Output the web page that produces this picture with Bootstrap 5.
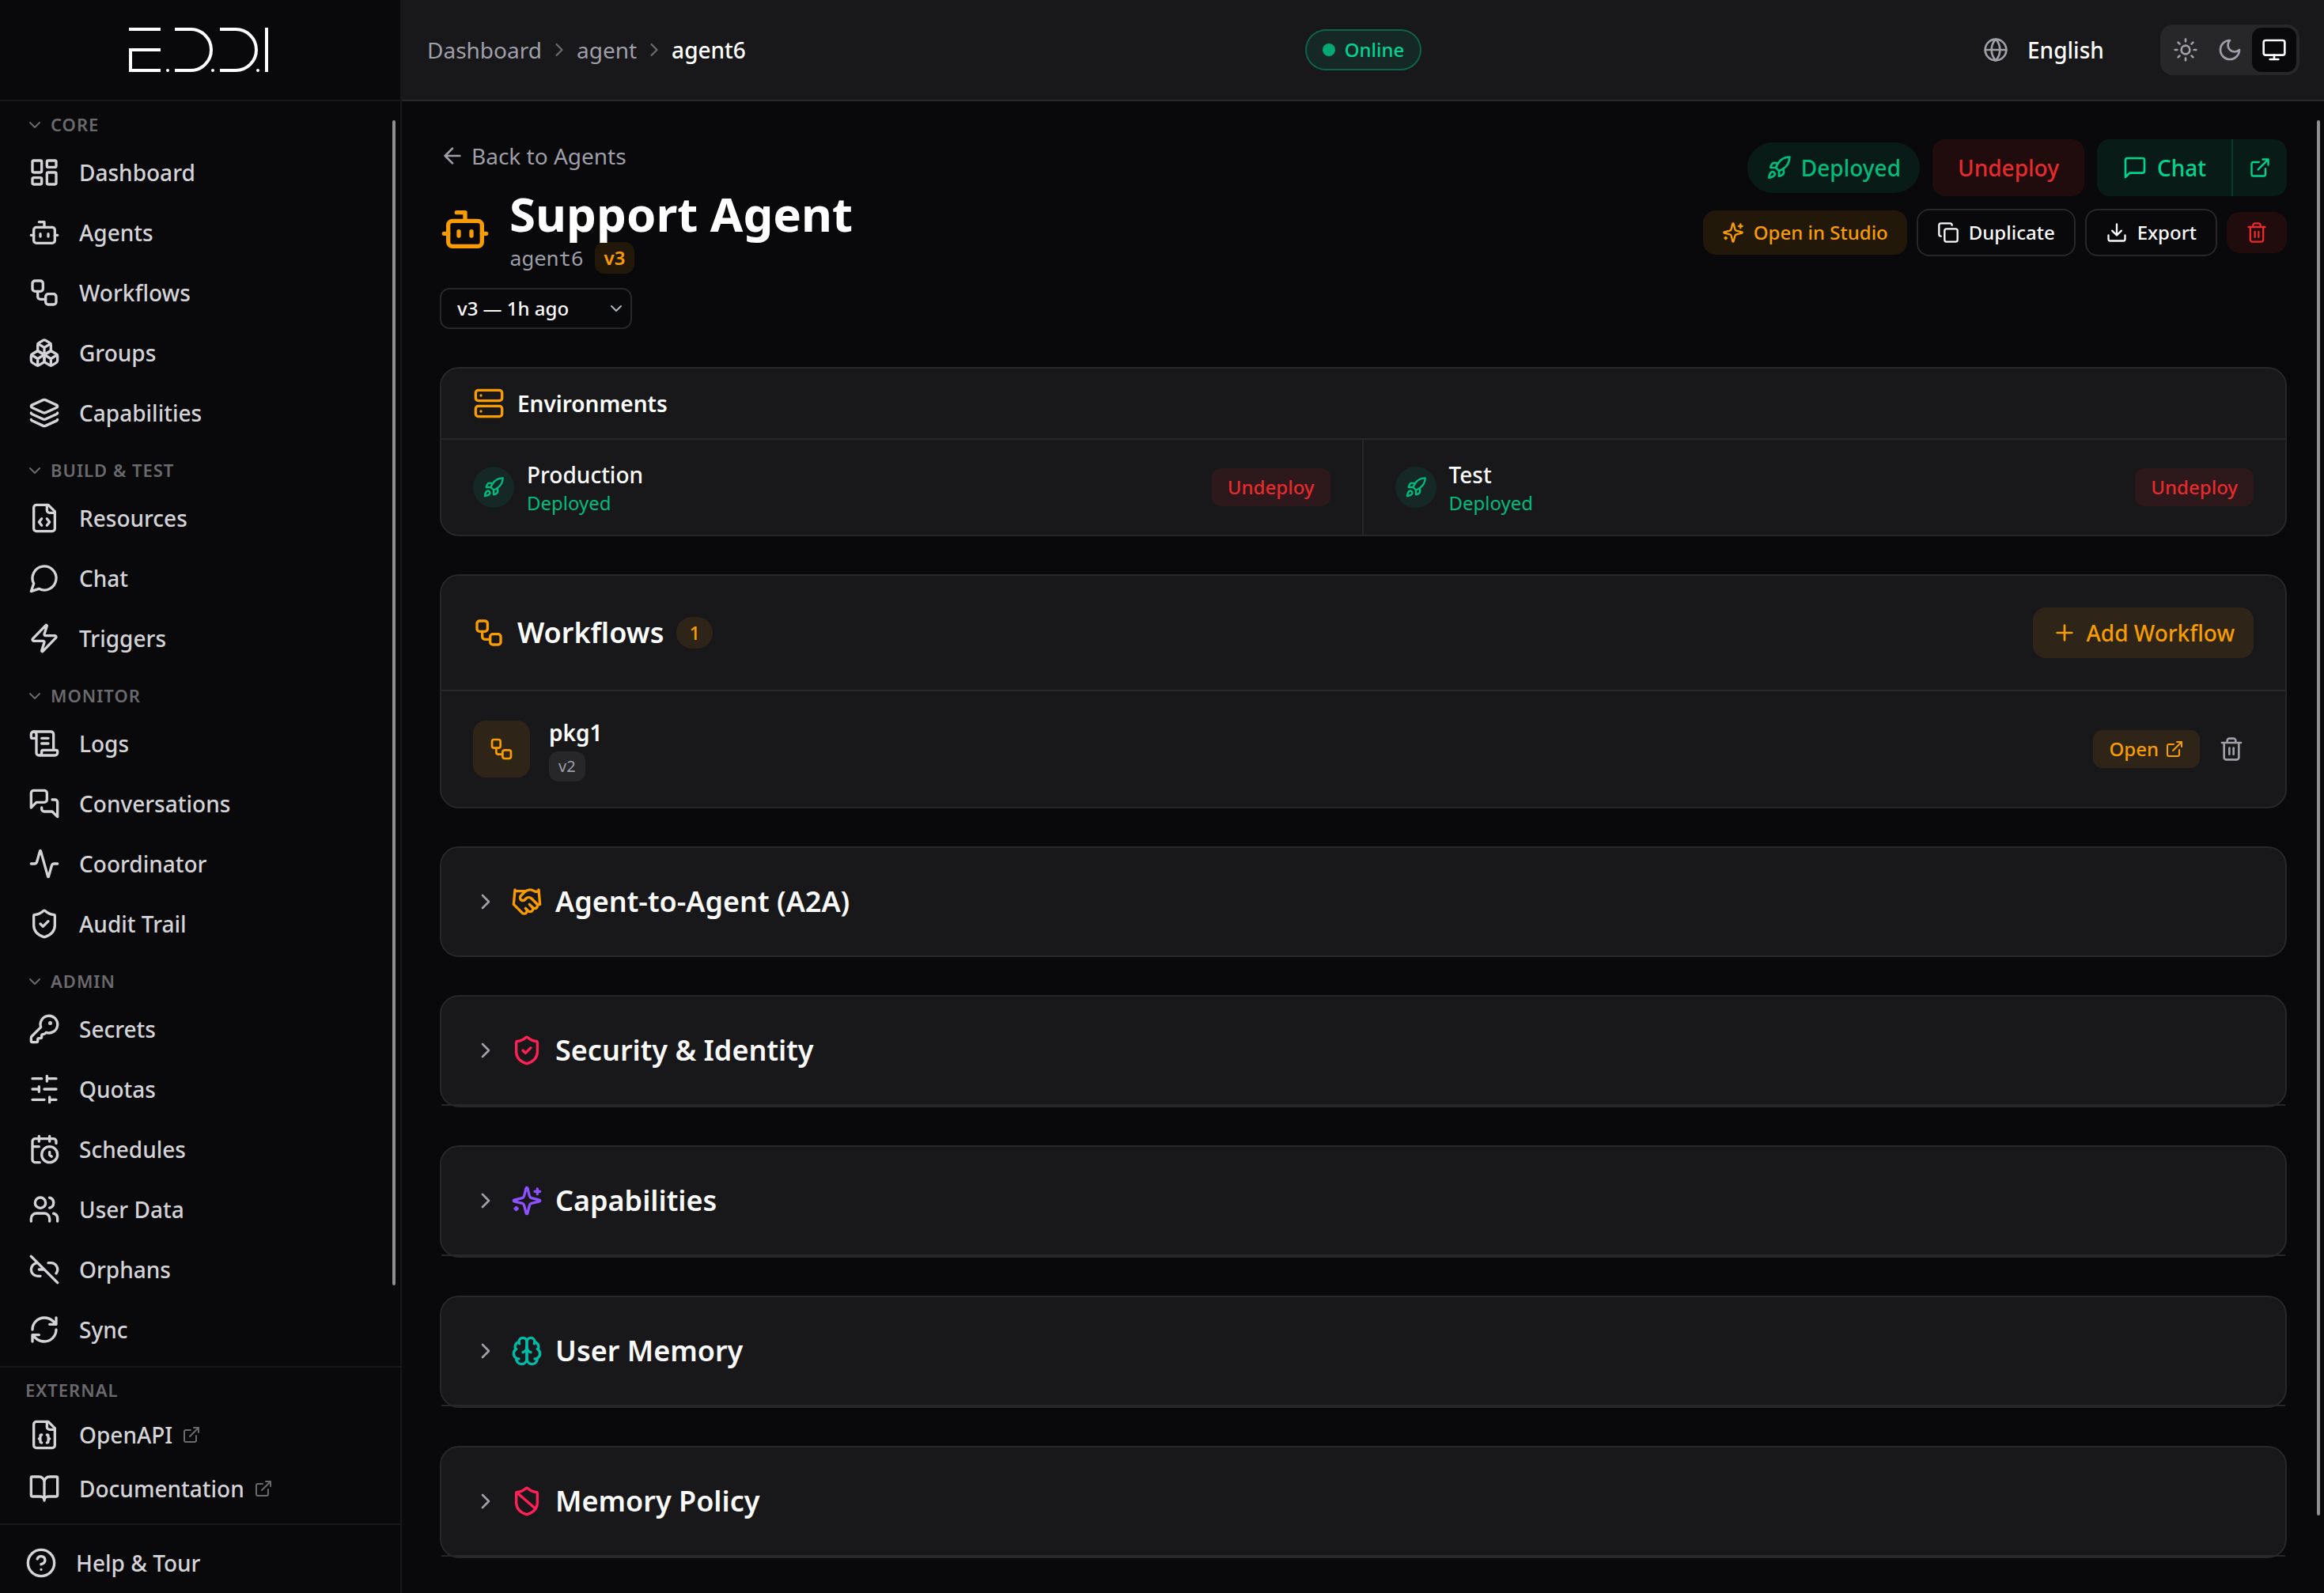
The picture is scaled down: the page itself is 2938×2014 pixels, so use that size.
<!DOCTYPE html>
<html lang="en" data-bs-theme="dark">
<head>
<meta charset="utf-8">
<meta name="viewport" content="width=device-width, initial-scale=1">
<title>Support Agent - EDDI</title>
<link rel="stylesheet" href="https://cdn.jsdelivr.net/npm/bootstrap@5.3.0/dist/css/bootstrap.min.css">
<style>
  :root {
    --ink: #fafafa;
    --ink-nav: #d4d4d8;
    --ink-soft: #9f9fa9;
    --ink-faint: #6a6a6e;
    --page: #09090b;
    --panel: #18181b;
    --line: #27272a;
    --amber: #f99c00;
    --amber-bg: rgba(249, 156, 0, .1);
    --green: #00bc7d;
    --green-lt: #00d492;
    --green-bg: rgba(0, 188, 125, .1);
    --red: #e92a2c;
    --red-bg: rgba(231, 37, 42, .1);
  }
  body {
    font-family: "Noto Sans", sans-serif;
    font-size: 28px;
    line-height: 40px;
    color: var(--ink);
    background: var(--page);
    height: 100vh;
    overflow: hidden;
  }
  a { text-decoration: none; color: inherit; }
  h1, h2, h3, p { margin: 0; }
  .ico { fill: none; stroke: currentColor; stroke-width: 2; stroke-linecap: round; stroke-linejoin: round; flex: none; width: 28px; height: 28px; }
  .ico-24 { width: 24px; height: 24px; }
  .ico-32 { width: 32px; height: 32px; }
  .ico-40 { width: 40px; height: 40px; }
  .ico-64 { width: 64px; height: 64px; }
  .gap-8 { gap: 8px; }
  .gap-12 { gap: 12px; }
  .gap-14 { gap: 14px; }
  .gap-16 { gap: 16px; }
  .gap-24 { gap: 24px; }
  .gap-48 { gap: 48px; }
  .fs-24 { font-size: 24px; line-height: 32px; }
  .fw-mid { font-weight: 500; }
  .c-soft { color: var(--ink-soft); }
  .c-faint { color: var(--ink-faint); }
  .c-amber { color: var(--amber); }
  .c-green { color: var(--green); }
  .c-rose { color: #ff2056; }
  .c-violet { color: #8e51ff; }
  .c-teal { color: #00bba7; }

  /* sidebar */
  .side { width: 508px; flex: none; border-right: 2px solid var(--panel); color: var(--ink-nav); font-weight: 500; }
  .side-logo { height: 128px; border-bottom: 2px solid var(--panel); }
  .side-logo svg { width: 180px; height: 56px; fill: none; stroke: #fff; stroke-width: 4; }
  .side-nav { padding: 5px 16px 0; min-height: 0; overflow: hidden; }
  .side-list { display: flex; flex-direction: column; gap: 4px; margin-bottom: 12px; }
  .side-head { display: flex; align-items: center; gap: 8px; width: 100%; border: 0; background: none; padding: 8px 16px; text-align: left; }
  .side-head, .side-title { font-size: 22px; line-height: 33px; font-weight: 600; letter-spacing: 1px; color: var(--ink-faint); text-transform: uppercase; }
  .side-link { display: flex; align-items: center; gap: 24px; padding: 16px 20px; border-radius: 16px; }
  .side-ext { border-top: 2px solid var(--panel); padding: 12px 16px; }
  .side-ext .side-title { padding: 0 16px; margin-bottom: 8px; }
  .side-ext .side-list { margin: 0; }
  .side-ext .side-link { padding: 12px 20px; }
  .side-ext .ico-24 { color: var(--ink-faint); margin-left: -12px; }
  .side-foot { border-top: 2px solid var(--panel); padding: 12px 16px 2px; }
  .side-foot .side-link { padding: 16px; background: none; border: 0; color: inherit; font-weight: 500; width: 100%; }
  .thumb-bar { position: absolute; width: 4px; border-radius: 4px; background: #8f8f91; }
  .thumb-side { top: 152px; right: 6px; bottom: 389px; }
  .thumb-main { top: 24px; right: 5px; bottom: 98px; }

  /* top bar */
  .top { height: 128px; border-bottom: 2px solid var(--line); background: var(--panel); margin-left: -2px; padding: 0 31px 0 34px; }
  .top > div { flex: 1 1 0; }
  .online { border: 2px solid rgba(0, 188, 125, .4); background: var(--green-bg); color: var(--green-lt); padding: 8px 20px; border-radius: 26px; }
  .online i { width: 16px; height: 16px; border-radius: 50%; background: #05aa72; }
  .lang select { appearance: none; background: none; border: 0; color: var(--ink); font-weight: 500; width: 120px; padding: 0; }
  .theme { background: var(--line); border-radius: 16px; padding: 4px; }
  .theme button { width: 56px; height: 56px; border: 0; border-radius: 12px; background: none; color: var(--ink-soft); padding: 0; display: grid; place-items: center; }
  .theme button.on { background: var(--page); color: var(--ink); }

  /* page */
  .page { padding: 48px 47px 48px 48px; min-height: 0; }
  .back { line-height: 42px; }
  .ident { padding-bottom: 2px; }
  .title-xl { font-size: 60px; line-height: 72px; font-weight: 700; }
  .mono { font-family: "Noto Sans Mono", "DejaVu Sans Mono", monospace; font-size: 26px; line-height: 32px; }
  .tagbox { font-size: 24px; line-height: 32px; padding: 4px 12px; border-radius: 12px; font-weight: 600; background: var(--amber-bg); color: var(--amber); }
  .tagbox-v2 { font-size: 20px; line-height: 30px; font-weight: 400; background: var(--line); color: var(--ink-soft); align-self: flex-start; margin-top: 4px; }
  .pill-count { font-size: 24px; line-height: 32px; font-weight: 500; padding: 4px 16px; border-radius: 20px; background: var(--amber-bg); color: var(--amber); }
  .ver { --bs-form-select-bg-img: url("data:image/svg+xml,%3csvg xmlns='http://www.w3.org/2000/svg' viewBox='0 0 16 16'%3e%3cpath fill='none' stroke='%23fafafa' stroke-width='3' stroke-linecap='round' stroke-linejoin='round' d='m2 5 6 6 6-6'/%3e%3c/svg%3e");
    width: 243px; height: 52px; padding: 0 48px 0 20px; font-size: 24px; line-height: 48px; font-weight: 500; border: 2px solid var(--line); border-radius: 12px; color: var(--ink); background-color: var(--page); background-size: 16px 16px; background-position: right 10px center; }
  .b { display: inline-flex; align-items: center; justify-content: center; border: 0; gap: 12px; font-weight: 500; border-radius: 16px; padding: 12px 24px; font-size: 24px; line-height: 32px; color: var(--ink); background: none; }
  .b-lg { font-size: 28px; line-height: 40px; padding: 16px 32px; }
  .b-md { font-size: 28px; line-height: 40px; padding: 12px 24px; }
  .b-sm { padding: 8px 20px; gap: 8px; border-radius: 12px; }
  .b-line { border: 2px solid var(--line); }
  .b-amber { background: var(--amber-bg); color: var(--amber); }
  .b-red { background: var(--red-bg); color: var(--red); }
  .b-green { background: var(--green-bg); color: var(--green-lt); }
  .b-trash { padding: 12px; color: var(--ink-soft); }
  .b-del { padding: 12px 24px; }
  .chat-pair { border-radius: 16px; overflow: hidden; }
  .chat-pair .b { border-radius: 0; }
  .chat-pair .b + .b { border-left: 2px solid rgba(0, 188, 125, .2); padding: 0 20px; }
  .state { border-radius: 32px; color: var(--green); }
  .panel { background: var(--panel); border: 2px solid var(--line); border-radius: 24px; }
  .panel-top { padding: 24px 40px; border-bottom: 2px solid var(--line); }
  .panel-top-lg { padding: 40px; }
  .env { padding: 24px 40px; }
  .env:first-child { border-right: 2px solid var(--line); }
  .dotico { width: 52px; height: 52px; border-radius: 50%; background: var(--green-bg); display: grid; place-items: center; }
  .wf-row { padding: 32px 40px; }
  .wf-ico { width: 72px; height: 72px; border-radius: 16px; background: var(--amber-bg); display: grid; place-items: center; }
  .title-md { font-size: 36px; line-height: 56px; font-weight: 600; }
  .title-sm { font-size: 28px; line-height: 40px; font-weight: 600; }
  .fold { display: flex; align-items: center; gap: 16px; width: 100%; padding: 40px; background: none; border: 0; color: var(--ink); text-align: left; }
  .fold-line { border-bottom: 2px solid var(--line); }
</style>
<script src="https://cdn.jsdelivr.net/npm/bootstrap@5.3.0/dist/js/bootstrap.bundle.min.js"></script>
</head>
<body class="d-flex">
<svg class="d-none" aria-hidden="true">
  <symbol id="dash" viewBox="0 0 24 24"><rect width="7" height="9" x="3" y="3" rx="1"/><rect width="7" height="5" x="14" y="3" rx="1"/><rect width="7" height="9" x="14" y="12" rx="1"/><rect width="7" height="5" x="3" y="16" rx="1"/></symbol>
  <symbol id="bot" viewBox="0 0 24 24"><path d="M12 8V4H8"/><rect width="16" height="12" x="4" y="8" rx="2"/><path d="M2 14h2M20 14h2M15 13v2M9 13v2"/></symbol>
  <symbol id="flow" viewBox="0 0 24 24"><rect width="8" height="8" x="3" y="3" rx="2"/><path d="M7 11v4a2 2 0 0 0 2 2h4"/><rect width="8" height="8" x="13" y="13" rx="2"/></symbol>
  <symbol id="boxes" viewBox="0 0 24 24"><path d="M2.97 12.92A2 2 0 0 0 2 14.63v3.24a2 2 0 0 0 .97 1.71l3 1.8a2 2 0 0 0 2.06 0L12 19v-5.5l-5-3-4.03 2.42Z"/><path d="m7 16.5-4.74-2.85M7 16.5l5-3M7 16.5v5.17"/><path d="M12 13.5V19l3.97 2.38a2 2 0 0 0 2.06 0l3-1.8a2 2 0 0 0 .97-1.71v-3.24a2 2 0 0 0-.97-1.71L17 10.5l-5 3Z"/><path d="m17 16.5-5-3M17 16.5l4.74-2.85M17 16.5v5.17"/><path d="M7.97 4.42A2 2 0 0 0 7 6.13v4.37l5 3 5-3V6.13a2 2 0 0 0-.97-1.71l-3-1.8a2 2 0 0 0-2.06 0l-3 1.8Z"/><path d="M12 8 7.26 5.15M12 8l4.74-2.85M12 13.5V8"/></symbol>
  <symbol id="layers" viewBox="0 0 24 24"><path d="M12.83 2.18a2 2 0 0 0-1.66 0L2.6 6.08a1 1 0 0 0 0 1.83l8.58 3.91a2 2 0 0 0 1.66 0l8.58-3.9a1 1 0 0 0 0-1.83z"/><path d="M2 12a1 1 0 0 0 .58.91l8.6 3.91a2 2 0 0 0 1.65 0l8.58-3.9A1 1 0 0 0 22 12"/><path d="M2 17a1 1 0 0 0 .58.91l8.6 3.91a2 2 0 0 0 1.65 0l8.58-3.9A1 1 0 0 0 22 17"/></symbol>
  <symbol id="fcode" viewBox="0 0 24 24"><path d="M15 2H6a2 2 0 0 0-2 2v16a2 2 0 0 0 2 2h12a2 2 0 0 0 2-2V7Z"/><path d="M14 2v4a2 2 0 0 0 2 2h4M10 12.5 8 15l2 2.5M14 12.5l2 2.5-2 2.5"/></symbol>
  <symbol id="fjson" viewBox="0 0 24 24"><path d="M15 2H6a2 2 0 0 0-2 2v16a2 2 0 0 0 2 2h12a2 2 0 0 0 2-2V7Z"/><path d="M14 2v4a2 2 0 0 0 2 2h4M10 12a1 1 0 0 0-1 1v1a1 1 0 0 1-1 1 1 1 0 0 1 1 1v1a1 1 0 0 0 1 1M14 18a1 1 0 0 0 1-1v-1a1 1 0 0 1 1-1 1 1 0 0 1-1-1v-1a1 1 0 0 0-1-1"/></symbol>
  <symbol id="bubble" viewBox="0 0 24 24"><path d="M7.9 20A9 9 0 1 0 4 16.1L2 22Z"/></symbol>
  <symbol id="zap" viewBox="0 0 24 24"><path d="M4 14a1 1 0 0 1-.78-1.63l9.9-10.2a.5.5 0 0 1 .86.46l-1.92 6.02A1 1 0 0 0 13 10h7a1 1 0 0 1 .78 1.63l-9.9 10.2a.5.5 0 0 1-.86-.46l1.92-6.02A1 1 0 0 0 11 14z"/></symbol>
  <symbol id="scroll" viewBox="0 0 24 24"><path d="M15 12h-5M15 8h-5M19 17V5a2 2 0 0 0-2-2H4"/><path d="M8 21h12a2 2 0 0 0 2-2v-1a1 1 0 0 0-1-1H11a1 1 0 0 0-1 1v1a2 2 0 1 1-4 0V5a2 2 0 1 0-4 0v2a1 1 0 0 0 1 1h3"/></symbol>
  <symbol id="talks" viewBox="0 0 24 24"><path d="M14 9a2 2 0 0 1-2 2H6l-4 4V4a2 2 0 0 1 2-2h8a2 2 0 0 1 2 2z"/><path d="M18 9h2a2 2 0 0 1 2 2v11l-4-4h-6a2 2 0 0 1-2-2v-1"/></symbol>
  <symbol id="pulse" viewBox="0 0 24 24"><path d="M22 12h-2.48a2 2 0 0 0-1.93 1.46l-2.35 8.36a.25.25 0 0 1-.48 0L9.24 2.18a.25.25 0 0 0-.48 0l-2.35 8.36A2 2 0 0 1 4.49 12H2"/></symbol>
  <symbol id="shield" viewBox="0 0 24 24"><path d="M20 13c0 5-3.5 7.5-7.66 8.95a1 1 0 0 1-.67-.01C7.5 20.5 4 18 4 13V6a1 1 0 0 1 1-1c2 0 4.5-1.2 6.24-2.72a1.17 1.17 0 0 1 1.52 0C14.51 3.81 17 5 19 5a1 1 0 0 1 1 1z"/><path d="m9 12 2 2 4-4"/></symbol>
  <symbol id="ban" viewBox="0 0 24 24"><path d="M20 13c0 5-3.5 7.5-7.66 8.95a1 1 0 0 1-.67-.01C7.5 20.5 4 18 4 13V6a1 1 0 0 1 1-1c2 0 4.5-1.2 6.24-2.72a1.17 1.17 0 0 1 1.52 0C14.51 3.81 17 5 19 5a1 1 0 0 1 1 1z"/><path d="m4.243 5.21 14.39 12.472"/></symbol>
  <symbol id="key" viewBox="0 0 24 24"><path d="M2.586 17.414A2 2 0 0 0 2 18.828V21a1 1 0 0 0 1 1h3a1 1 0 0 0 1-1v-1a1 1 0 0 1 1-1h1a1 1 0 0 0 1-1v-1a1 1 0 0 1 1-1h.172a2 2 0 0 0 1.414-.586l.814-.814a6.5 6.5 0 1 0-4-4z"/><circle cx="16.5" cy="7.5" r=".5" fill="currentColor"/></symbol>
  <symbol id="sliders" viewBox="0 0 24 24"><path d="M21 4h-7M10 4H3M21 12h-9M8 12H3M21 20h-5M12 20H3M14 2v4M8 10v4M16 18v4"/></symbol>
  <symbol id="cal" viewBox="0 0 24 24"><path d="M21 7.5V6a2 2 0 0 0-2-2H5a2 2 0 0 0-2 2v14a2 2 0 0 0 2 2h3.5M16 2v4M8 2v4M3 10h5M17.5 17.5 16 16.3V14"/><circle cx="16" cy="16" r="6"/></symbol>
  <symbol id="users" viewBox="0 0 24 24"><path d="M16 21v-2a4 4 0 0 0-4-4H6a4 4 0 0 0-4 4v2"/><circle cx="9" cy="7" r="4"/><path d="M22 21v-2a4 4 0 0 0-3-3.87M16 3.13a4 4 0 0 1 0 7.75"/></symbol>
  <symbol id="unlink" viewBox="0 0 24 24"><path d="M9 17H7A5 5 0 0 1 7 7M15 7h2a5 5 0 0 1 4 8M8 12h4M2 2l20 20"/></symbol>
  <symbol id="sync" viewBox="0 0 24 24"><path d="M3 12a9 9 0 0 1 9-9 9.75 9.75 0 0 1 6.74 2.74L21 8M21 3v5h-5M21 12a9 9 0 0 1-9 9 9.75 9.75 0 0 1-6.74-2.74L3 16M8 16H3v5"/></symbol>
  <symbol id="book" viewBox="0 0 24 24"><path d="M12 7v14M3 18a1 1 0 0 1-1-1V4a1 1 0 0 1 1-1h5a4 4 0 0 1 4 4 4 4 0 0 1 4-4h5a1 1 0 0 1 1 1v13a1 1 0 0 1-1 1h-6a3 3 0 0 0-3 3 3 3 0 0 0-3-3z"/></symbol>
  <symbol id="help" viewBox="0 0 24 24"><circle cx="12" cy="12" r="10"/><path d="M9.09 9a3 3 0 0 1 5.83 1c0 2-3 3-3 3M12 17h.01"/></symbol>
  <symbol id="ext" viewBox="0 0 24 24"><path d="M15 3h6v6M10 14 21 3M18 13v6a2 2 0 0 1-2 2H5a2 2 0 0 1-2-2V8a2 2 0 0 1 2-2h6"/></symbol>
  <symbol id="globe" viewBox="0 0 24 24"><circle cx="12" cy="12" r="10"/><path d="M12 2a14.5 14.5 0 0 0 0 20 14.5 14.5 0 0 0 0-20M2 12h20"/></symbol>
  <symbol id="sun" viewBox="0 0 24 24"><circle cx="12" cy="12" r="4"/><path d="M12 2v2M12 20v2M4.93 4.93l1.41 1.41M17.66 17.66l1.41 1.41M2 12h2M20 12h2M6.34 17.66l-1.41 1.41M19.07 4.93l-1.41 1.41"/></symbol>
  <symbol id="moon" viewBox="0 0 24 24"><path d="M12 3a6 6 0 0 0 9 9 9 9 0 1 1-9-9Z"/></symbol>
  <symbol id="monitor" viewBox="0 0 24 24"><rect width="20" height="14" x="2" y="3" rx="2"/><path d="M8 21h8M12 17v4"/></symbol>
  <symbol id="rocket" viewBox="0 0 24 24"><path d="M4.5 16.5c-1.5 1.26-2 5-2 5s3.74-.5 5-2c.71-.84.7-2.13-.09-2.91a2.18 2.18 0 0 0-2.91-.09zM12 15l-3-3a22 22 0 0 1 2-3.95A12.88 12.88 0 0 1 22 2c0 2.72-.78 7.5-6 11a22.35 22.35 0 0 1-4 2z"/><path d="M9 12H4s.55-3.03 2-4c1.62-1.08 5 0 5 0M12 15v5s3.03-.55 4-2c1.08-1.62 0-5 0-5"/></symbol>
  <symbol id="msg" viewBox="0 0 24 24"><path d="M21 15a2 2 0 0 1-2 2H7l-4 4V5a2 2 0 0 1 2-2h14a2 2 0 0 1 2 2z"/></symbol>
  <symbol id="spark" viewBox="0 0 24 24"><path d="M9.937 15.5A2 2 0 0 0 8.5 14.063l-6.135-1.582a.5.5 0 0 1 0-.962L8.5 9.936A2 2 0 0 0 9.937 8.5l1.582-6.135a.5.5 0 0 1 .963 0L14.063 8.5A2 2 0 0 0 15.5 9.937l6.135 1.581a.5.5 0 0 1 0 .964L15.5 14.063a2 2 0 0 0-1.437 1.437l-1.582 6.135a.5.5 0 0 1-.963 0z"/><path d="M20 3v4M22 5h-4M4 17v2M5 18H3"/></symbol>
  <symbol id="copy" viewBox="0 0 24 24"><rect width="14" height="14" x="8" y="8" rx="2"/><path d="M4 16c-1.1 0-2-.9-2-2V4c0-1.1.9-2 2-2h10c1.1 0 2 .9 2 2"/></symbol>
  <symbol id="down" viewBox="0 0 24 24"><path d="M21 15v4a2 2 0 0 1-2 2H5a2 2 0 0 1-2-2v-4M7 10l5 5 5-5M12 15V3"/></symbol>
  <symbol id="trash" viewBox="0 0 24 24"><path d="M3 6h18M19 6v14c0 1-1 2-2 2H7c-1 0-2-1-2-2V6M8 6V4c0-1 1-2 2-2h4c1 0 2 1 2 2v2M10 11v6M14 11v6"/></symbol>
  <symbol id="server" viewBox="0 0 24 24"><rect width="20" height="8" x="2" y="2" rx="2"/><rect width="20" height="8" x="2" y="14" rx="2"/><path d="M6 6h.01M6 18h.01"/></symbol>
  <symbol id="plus" viewBox="0 0 24 24"><path d="M5 12h14M12 5v14"/></symbol>
  <symbol id="chev-d" viewBox="0 0 24 24"><path d="m6 9 6 6 6-6"/></symbol>
  <symbol id="chev-r" viewBox="0 0 24 24"><path d="m9 18 6-6-6-6"/></symbol>
  <symbol id="arrow-l" viewBox="0 0 24 24"><path d="m12 19-7-7 7-7M19 12H5"/></symbol>
  <symbol id="shake" viewBox="0 0 24 24"><path d="m11 17 2 2a1 1 0 1 0 3-3"/><path d="m14 14 2.5 2.5a1 1 0 1 0 3-3l-3.88-3.88a3 3 0 0 0-4.24 0l-.88.88a1 1 0 1 1-3-3l2.81-2.81a5.79 5.79 0 0 1 7.06-.87l.47.28a2 2 0 0 0 1.42.25L21 4"/><path d="m21 3 1 11h-2M3 3 2 14l6.5 6.5a1 1 0 1 0 3-3M3 4h8"/></symbol>
  <symbol id="brain" viewBox="0 0 24 24"><path d="M12 5a3 3 0 1 0-5.997.125 4 4 0 0 0-2.526 5.77 4 4 0 0 0 .556 6.588A4 4 0 1 0 12 18Z"/><path d="M12 5a3 3 0 1 1 5.997.125 4 4 0 0 1 2.526 5.77 4 4 0 0 1-.556 6.588A4 4 0 1 1 12 18Z"/><path d="M15 13a4.5 4.5 0 0 1-3-4 4.5 4.5 0 0 1-3 4M17.599 6.5a3 3 0 0 0 .399-1.375M6.003 5.125A3 3 0 0 0 6.401 6.5M3.477 10.896a4 4 0 0 1 .585-.396M19.938 10.5a4 4 0 0 1 .585.396M6 18a4 4 0 0 1-1.967-.516M19.967 17.484A4 4 0 0 1 18 18"/></symbol>
</svg>

<aside class="side d-flex flex-column vh-100 position-relative">
  <a class="side-logo d-flex align-items-center justify-content-center flex-shrink-0" href="#">
    <svg viewBox="163 35 180 56" role="img" aria-label="EDDI">
      <path d="M163 37h40M203 63h-38v26h38"/>
      <path d="M221 37h20a26 26 0 0 1 0 52h-20M278 37h20a26 26 0 0 1 0 52h-20M337 35v56"/>
      <g fill="#fff" stroke="none"><circle cx="212" cy="89" r="2"/><circle cx="269" cy="89" r="2"/><circle cx="326" cy="89" r="2"/></g>
    </svg>
  </a>
  <nav class="side-nav flex-grow-1">
    <button class="side-head" type="button"><svg class="ico ico-24"><use href="#chev-d"/></svg>Core</button>
    <div class="side-list">
      <a class="side-link" href="#"><svg class="ico ico-40"><use href="#dash"/></svg>Dashboard</a>
      <a class="side-link" href="#"><svg class="ico ico-40"><use href="#bot"/></svg>Agents</a>
      <a class="side-link" href="#"><svg class="ico ico-40"><use href="#flow"/></svg>Workflows</a>
      <a class="side-link" href="#"><svg class="ico ico-40"><use href="#boxes"/></svg>Groups</a>
      <a class="side-link" href="#"><svg class="ico ico-40"><use href="#layers"/></svg>Capabilities</a>
    </div>
    <button class="side-head" type="button"><svg class="ico ico-24"><use href="#chev-d"/></svg>Build &amp; Test</button>
    <div class="side-list">
      <a class="side-link" href="#"><svg class="ico ico-40"><use href="#fcode"/></svg>Resources</a>
      <a class="side-link" href="#"><svg class="ico ico-40"><use href="#bubble"/></svg>Chat</a>
      <a class="side-link" href="#"><svg class="ico ico-40"><use href="#zap"/></svg>Triggers</a>
    </div>
    <button class="side-head" type="button"><svg class="ico ico-24"><use href="#chev-d"/></svg>Monitor</button>
    <div class="side-list">
      <a class="side-link" href="#"><svg class="ico ico-40"><use href="#scroll"/></svg>Logs</a>
      <a class="side-link" href="#"><svg class="ico ico-40"><use href="#talks"/></svg>Conversations</a>
      <a class="side-link" href="#"><svg class="ico ico-40"><use href="#pulse"/></svg>Coordinator</a>
      <a class="side-link" href="#"><svg class="ico ico-40"><use href="#shield"/></svg>Audit Trail</a>
    </div>
    <button class="side-head" type="button"><svg class="ico ico-24"><use href="#chev-d"/></svg>Admin</button>
    <div class="side-list">
      <a class="side-link" href="#"><svg class="ico ico-40"><use href="#key"/></svg>Secrets</a>
      <a class="side-link" href="#"><svg class="ico ico-40"><use href="#sliders"/></svg>Quotas</a>
      <a class="side-link" href="#"><svg class="ico ico-40"><use href="#cal"/></svg>Schedules</a>
      <a class="side-link" href="#"><svg class="ico ico-40"><use href="#users"/></svg>User Data</a>
      <a class="side-link" href="#"><svg class="ico ico-40"><use href="#unlink"/></svg>Orphans</a>
      <a class="side-link" href="#"><svg class="ico ico-40"><use href="#sync"/></svg>Sync</a>
    </div>
  </nav>
  <div class="side-ext">
    <p class="side-title">External</p>
    <div class="side-list">
      <a class="side-link" href="#"><svg class="ico ico-40"><use href="#fjson"/></svg>OpenAPI<svg class="ico ico-24"><use href="#ext"/></svg></a>
      <a class="side-link" href="#"><svg class="ico ico-40"><use href="#book"/></svg>Documentation<svg class="ico ico-24"><use href="#ext"/></svg></a>
    </div>
  </div>
  <div class="side-foot">
    <button class="side-link" type="button"><svg class="ico ico-40"><use href="#help"/></svg>Help &amp; Tour</button>
  </div>
  <div class="thumb-bar thumb-side"></div>
</aside>

<div class="d-flex flex-column flex-grow-1 vh-100">
  <header class="top d-flex align-items-center flex-shrink-0">
    <div>
      <nav class="d-flex align-items-center gap-8 c-soft" aria-label="Breadcrumb">
        <a href="#">Dashboard</a><svg class="ico c-faint"><use href="#chev-r"/></svg><a href="#">agent</a><svg class="ico c-faint"><use href="#chev-r"/></svg><span class="fw-mid text-white">agent6</span>
      </nav>
    </div>
    <span class="online fs-24 fw-mid d-flex align-items-center gap-12"><i></i>Online</span>
    <div class="d-flex align-items-center justify-content-end gap-48">
      <label class="lang d-flex align-items-center gap-24"><svg class="ico ico-32 c-soft"><use href="#globe"/></svg><select aria-label="Language"><option>English</option></select></label>
      <div class="theme d-flex" role="group" aria-label="Theme">
        <button type="button" aria-label="Light"><svg class="ico ico-32"><use href="#sun"/></svg></button>
        <button type="button" aria-label="Dark"><svg class="ico ico-32"><use href="#moon"/></svg></button>
        <button type="button" class="on" aria-label="System"><svg class="ico ico-32"><use href="#monitor"/></svg></button>
      </div>
    </div>
  </header>

  <div class="position-relative flex-grow-1 overflow-hidden">
  <main class="page d-flex flex-column gap-48">
    <div class="d-flex justify-content-between align-items-start">
      <div class="d-flex flex-column gap-16">
        <a class="back c-soft d-flex align-items-center gap-8" href="#"><svg class="ico ico-32"><use href="#arrow-l"/></svg>Back to Agents</a>
        <div class="ident d-flex align-items-center gap-24">
          <svg class="ico ico-64 c-amber"><use href="#bot"/></svg>
          <div class="d-flex flex-column">
            <h1 class="title-xl">Support Agent</h1>
            <div class="d-flex align-items-center gap-14"><span class="mono c-soft">agent6</span><span class="tagbox">v3</span></div>
          </div>
        </div>
        <select class="form-select ver" aria-label="Version"><option>v3 — 1h ago</option></select>
      </div>
      <div class="d-flex flex-column align-items-end gap-16">
        <div class="d-flex align-items-center gap-16">
          <span class="b b-md b-green state"><svg class="ico ico-32"><use href="#rocket"/></svg>Deployed</span>
          <button class="b b-lg b-red" type="button">Undeploy</button>
          <div class="chat-pair d-flex">
            <button class="b b-lg b-green" type="button"><svg class="ico ico-32"><use href="#msg"/></svg>Chat</button>
            <a class="b b-green" href="#" aria-label="Open chat in new tab"><svg class="ico"><use href="#ext"/></svg></a>
          </div>
        </div>
        <div class="d-flex align-items-center gap-12">
          <button class="b b-amber" type="button"><svg class="ico"><use href="#spark"/></svg>Open in Studio</button>
          <button class="b b-line" type="button"><svg class="ico"><use href="#copy"/></svg>Duplicate</button>
          <button class="b b-line" type="button"><svg class="ico"><use href="#down"/></svg>Export</button>
          <button class="b b-red b-del" type="button" aria-label="Delete agent"><svg class="ico"><use href="#trash"/></svg></button>
        </div>
      </div>
    </div>

    <section class="panel">
      <div class="panel-top d-flex align-items-center gap-16"><svg class="ico ico-40 c-amber"><use href="#server"/></svg><h2 class="title-sm">Environments</h2></div>
      <div class="row g-0">
        <div class="col-6 env d-flex align-items-center gap-16">
          <span class="dotico c-green"><svg class="ico"><use href="#rocket"/></svg></span>
          <div class="flex-grow-1"><div class="fw-mid">Production</div><div class="fs-24 c-green">Deployed</div></div>
          <button class="b b-sm b-red" type="button">Undeploy</button>
        </div>
        <div class="col-6 env d-flex align-items-center gap-16">
          <span class="dotico c-green"><svg class="ico"><use href="#rocket"/></svg></span>
          <div class="flex-grow-1"><div class="fw-mid">Test</div><div class="fs-24 c-green">Deployed</div></div>
          <button class="b b-sm b-red" type="button">Undeploy</button>
        </div>
      </div>
    </section>

    <section class="panel">
      <div class="panel-top panel-top-lg d-flex align-items-center gap-16">
        <svg class="ico ico-40 c-amber"><use href="#flow"/></svg><h2 class="title-md">Workflows</h2><span class="pill-count">1</span>
        <button class="b b-md b-amber ms-auto" type="button"><svg class="ico ico-32"><use href="#plus"/></svg>Add Workflow</button>
      </div>
      <div class="wf-row d-flex align-items-center gap-24">
        <span class="wf-ico c-amber"><svg class="ico ico-32"><use href="#flow"/></svg></span>
        <div class="d-flex flex-column flex-grow-1"><h3 class="title-sm">pkg1</h3><span class="tagbox tagbox-v2">v2</span></div>
        <div class="d-flex align-items-center gap-12">
          <a class="b b-sm b-amber" href="#">Open<svg class="ico ico-24"><use href="#ext"/></svg></a>
          <button class="b b-trash" type="button" aria-label="Remove workflow"><svg class="ico ico-32"><use href="#trash"/></svg></button>
        </div>
      </div>
    </section>

    <section class="panel"><button class="fold" type="button"><svg class="ico ico-32 c-soft"><use href="#chev-r"/></svg><svg class="ico ico-40 c-amber"><use href="#shake"/></svg><span class="title-md">Agent-to-Agent (A2A)</span></button></section>
    <section class="panel"><button class="fold fold-line" type="button"><svg class="ico ico-32 c-soft"><use href="#chev-r"/></svg><svg class="ico ico-40 c-rose"><use href="#shield"/></svg><span class="title-md">Security &amp; Identity</span></button></section>
    <section class="panel"><button class="fold fold-line" type="button"><svg class="ico ico-32 c-soft"><use href="#chev-r"/></svg><svg class="ico ico-40 c-violet"><use href="#spark"/></svg><span class="title-md">Capabilities</span></button></section>
    <section class="panel"><button class="fold fold-line" type="button"><svg class="ico ico-32 c-soft"><use href="#chev-r"/></svg><svg class="ico ico-40 c-teal"><use href="#brain"/></svg><span class="title-md">User Memory</span></button></section>
    <section class="panel"><button class="fold fold-line" type="button"><svg class="ico ico-32 c-soft"><use href="#chev-r"/></svg><svg class="ico ico-40 c-rose"><use href="#ban"/></svg><span class="title-md">Memory Policy</span></button></section>
  </main>
  <div class="thumb-bar thumb-main"></div>
  </div>
</div>
</body>
</html>
